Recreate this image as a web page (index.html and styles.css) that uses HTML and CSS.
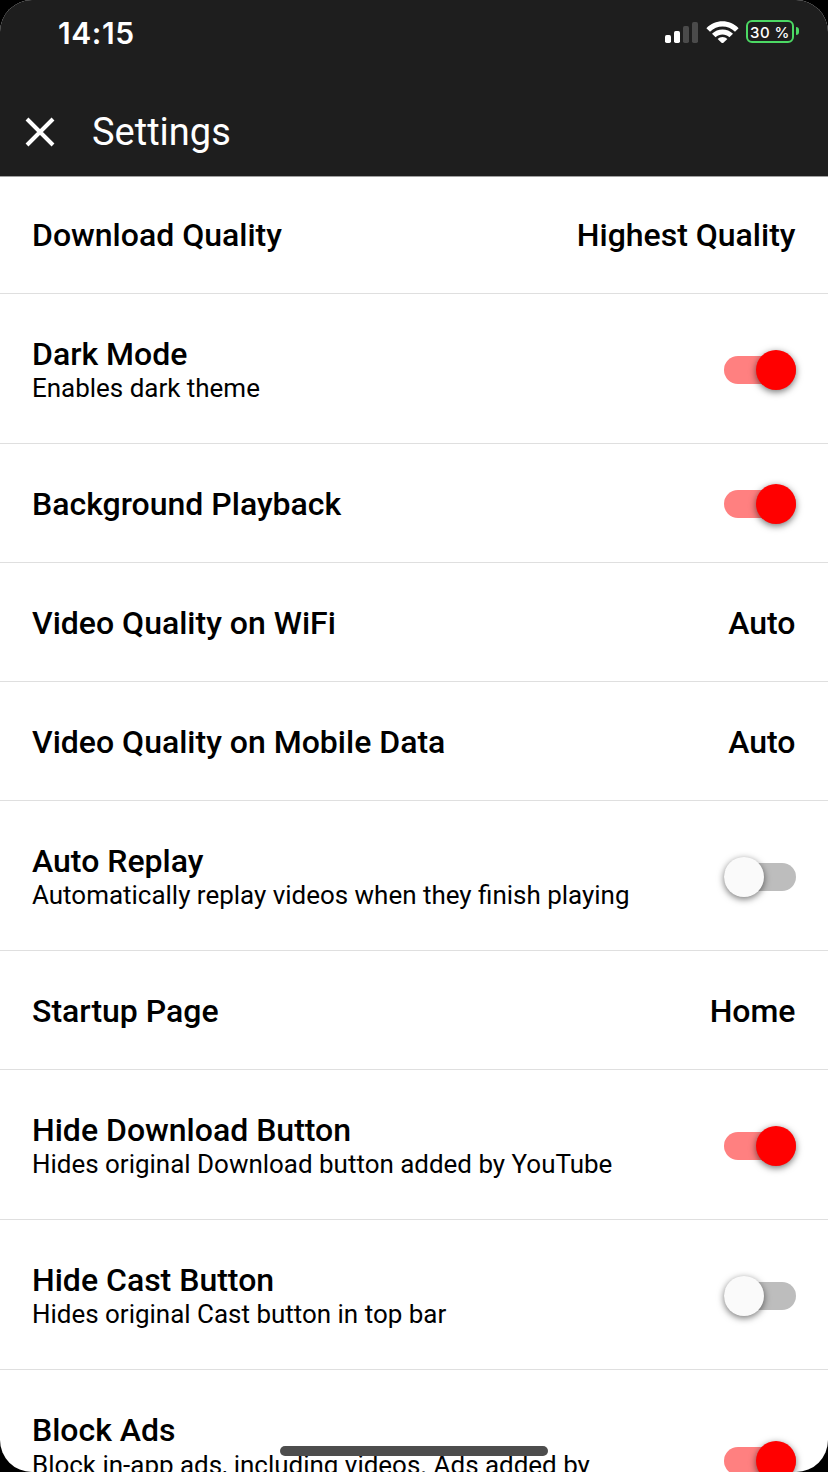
FILE: index.html
```html
<!DOCTYPE html>
<html lang="en">
<head>
    <meta charset="UTF-8">
    <meta name="viewport" content="width=device-width, initial-scale=1.0">
    <title>Settings</title>
    <link rel="stylesheet" href="styles.css">
</head>
<body>
    <div class="screen">
        <header>
            <div class="status-bar">
                <span class="time">14:15</span>
                <div class="status-icons">
                    <svg class="signal" width="33" height="22" viewBox="0 0 33 22">
                        <rect x="0" y="13" width="6" height="8" rx="1.7" fill="#fff"/>
                        <rect x="9" y="9" width="6" height="12" rx="1.7" fill="#fff"/>
                        <rect x="18" y="4" width="6" height="17" rx="1.7" fill="#4b4b4b"/>
                        <rect x="27" y="0" width="6" height="21" rx="1.7" fill="#4b4b4b"/>
                    </svg>
                    <svg class="wifi" width="33" height="22" viewBox="0 0 33 22">
                        <path d="M0.4 7.2C9 -2.1 24 -2.1 32.6 7.2L29 10.8C22 3.8 11 3.8 4 10.8Z" fill="#fff"/>
                        <path d="M6 12.8C11.5 6.9 21.5 6.9 27 12.8L23.4 16.3C19.5 12.6 13.5 12.6 9.6 16.3Z" fill="#fff"/>
                        <path d="M11.6 18.1C14.3 15.3 18.7 15.3 21.4 18.1L16.5 22.6Z" fill="#fff"/>
                    </svg>
                    <div class="battery">30 %</div>
                    <div class="battery-tip"></div>
                </div>
            </div>
            <div class="nav-bar">
                <svg width="30" height="30" viewBox="0 0 30 30">
                    <path d="M2 2L28 28M28 2L2 28" stroke="#fff" stroke-width="4"/>
                </svg>
                <h1>Settings</h1>
            </div>
        </header>

        <main>
            <div class="row first">
                <div class="title">Download Quality</div>
                <div class="value">Highest Quality</div>
            </div>
            <div class="row tall">
                <div>
                    <div class="title">Dark Mode</div>
                    <div class="subtitle">Enables dark theme</div>
                </div>
                <div class="switch on"></div>
            </div>
            <div class="row">
                <div class="title">Background Playback</div>
                <div class="switch on"></div>
            </div>
            <div class="row">
                <div class="title">Video Quality on WiFi</div>
                <div class="value">Auto</div>
            </div>
            <div class="row">
                <div class="title">Video Quality on Mobile Data</div>
                <div class="value">Auto</div>
            </div>
            <div class="row tall">
                <div>
                    <div class="title">Auto Replay</div>
                    <div class="subtitle">Automatically replay videos when they finish playing</div>
                </div>
                <div class="switch"></div>
            </div>
            <div class="row">
                <div class="title">Startup Page</div>
                <div class="value">Home</div>
            </div>
            <div class="row tall">
                <div>
                    <div class="title">Hide Download Button</div>
                    <div class="subtitle">Hides original Download button added by YouTube</div>
                </div>
                <div class="switch on"></div>
            </div>
            <div class="row tall">
                <div>
                    <div class="title">Hide Cast Button</div>
                    <div class="subtitle">Hides original Cast button in top bar</div>
                </div>
                <div class="switch"></div>
            </div>
            <div class="row taller">
                <div>
                    <div class="title">Block Ads</div>
                    <div class="subtitle">Block in-app ads, including videos. Ads added by</div>
                </div>
                <div class="switch on"></div>
            </div>
        </main>
        <div class="home-indicator"></div>
    </div>
</body>
</html>
```
FILE: styles.css
```css
* {
    box-sizing: border-box;
}
body {
    margin: 0;
    background-color: #000;
    font-family: Roboto, sans-serif;
    color: #000;
}
.screen {
    position: relative;
    width: 828px;
    height: 1472px;
    overflow: hidden;
    background-color: #fff;
    border-radius: 32px;
}
header {
    height: 176px;
    background-color: #1e1e1e;
    color: #fff;
}
.status-bar {
    display: flex;
    justify-content: space-between;
    height: 88px;
    padding: 14px 29px 0 58px;
}
.time {
    font-family: Inter, sans-serif;
    font-size: 30px;
    font-weight: 600;
    line-height: 38px;
    letter-spacing: 0.6px;
}
.status-icons {
    display: flex;
    align-items: center;
    height: 34px;
}
.signal {
    margin-top: 3px;
}
.wifi {
    margin-left: 8px;
    margin-top: 2px;
}
.battery {
    width: 48px;
    height: 23px;
    margin-left: 7px;
    border: 2px solid #4cd964;
    border-radius: 6px;
    font-family: Inter, sans-serif;
    font-size: 15px;
    font-weight: 500;
    line-height: 21px;
    letter-spacing: 0.5px;
    text-align: center;
    white-space: nowrap;
}
.battery-tip {
    width: 3px;
    height: 8px;
    margin-left: 2px;
    background-color: #4cd964;
    border-radius: 0 3px 3px 0;
}
.nav-bar {
    display: flex;
    align-items: center;
    height: 88px;
    padding-left: 25px;
}
h1 {
    margin: 0 0 0 37px;
    font-size: 38px;
    font-weight: 400;
}
.row {
    display: flex;
    justify-content: space-between;
    align-items: flex-start;
    height: 119px;
    padding: 41px 32px 0;
    border-bottom: 1px solid #dfdfdf;
}
.row.first {
    height: 118px;
    padding-top: 39px;
    border-top: 1px solid #a0a0a0;
}
.row.tall {
    height: 150px;
}
.row.taller {
    height: 180px;
}
.title, .value {
    font-size: 32px;
    font-weight: 500;
    line-height: 38px;
}
.value {
    margin-right: 0.5px;
}
.subtitle {
    font-size: 25.96px;
    line-height: 30px;
}
.taller .subtitle {
    margin-top: 1px;
}
.switch {
    position: relative;
    width: 72px;
    height: 28px;
    margin-top: 5px;
    border-radius: 14px;
    background-color: #bdbdbd;
}
.tall .switch {
    margin-top: 21px;
}
.taller .switch {
    margin-top: 36px;
}
.switch::after {
    content: "";
    position: absolute;
    top: -6px;
    left: 0;
    width: 40px;
    height: 40px;
    border-radius: 50%;
    background-color: #fafafa;
    box-shadow: 0 2px 7px rgba(0,0,0,0.55);
}
.switch.on {
    background-color: #ff8080;
}
.switch.on::after {
    left: 32px;
    background-color: #f00;
}
.home-indicator {
    position: absolute;
    left: 280px;
    bottom: 16px;
    width: 268px;
    height: 10px;
    border-radius: 5px;
    background-color: #4d4d4d;
}
```
